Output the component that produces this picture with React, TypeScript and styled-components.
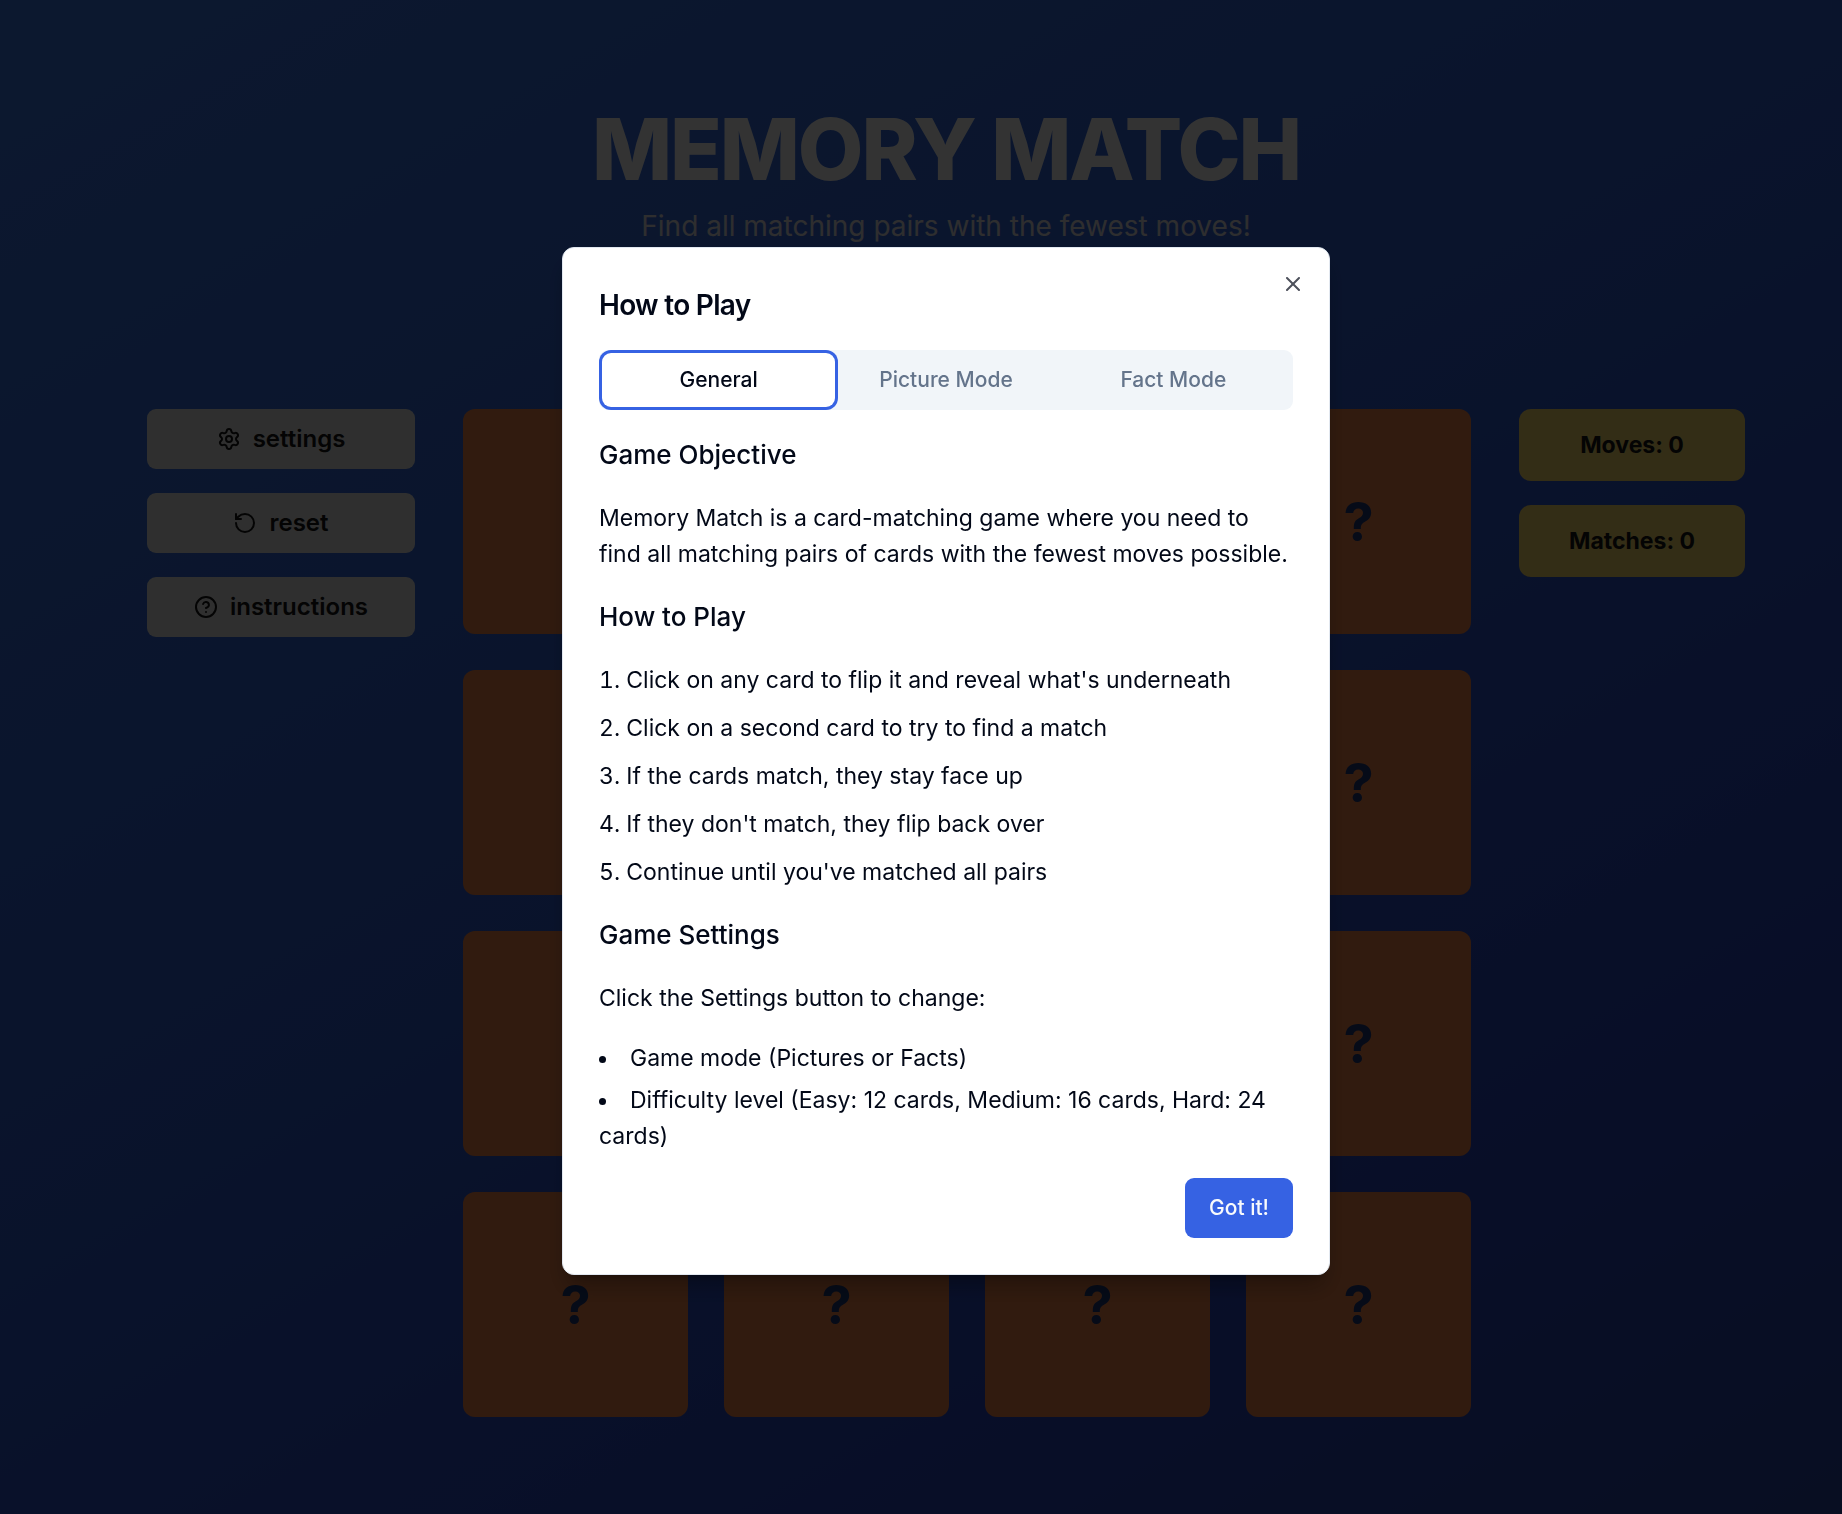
import React, { useState } from "react";
import styled, { createGlobalStyle } from "styled-components";
import { CircleQuestionMark, RotateCcw, Settings, X } from "lucide-react";

const GlobalStyle = createGlobalStyle`
  *, *::before, *::after { box-sizing: border-box; }
  body {
    margin: 0;
    font-family: Inter, "Liberation Sans", sans-serif;
    font-size: 23px;
    line-height: 36px;
    color: #020817;
  }
  h1, h2, h3, p, ol, ul { margin: 0; padding: 0; }
  button { font: inherit; border: 0; cursor: pointer; }
`;

const Page = styled.div`
  min-height: 100vh;
  padding: 105px 48px 96px 98px;
  background: linear-gradient(150deg, rgb(62, 122, 235), rgb(50, 98, 218) 45%, rgb(42, 70, 195) 80%, rgb(40, 70, 170));
`;

const Header = styled.header`
  display: flex;
  flex-direction: column;
  align-items: center;
  gap: 10px;
  margin-bottom: 162px;
  text-align: center;
`;

const GameTitle = styled.h1`
  font-size: 85px;
  line-height: 90px;
  font-weight: 800;
  letter-spacing: -0.025em;
  color: #fff;
`;

const Tagline = styled.p`
  font-size: 28px;
  line-height: 42px;
  color: #e6e6ea;
`;

const Game = styled.main`
  display: grid;
  grid-template-columns: 268px minmax(0, 1fr) 226px;
  gap: 48px;
  align-items: start;
  max-width: 1598px;
  margin: 0 auto;
`;

const Column = styled.div`
  display: flex;
  flex-direction: column;
  gap: 24px;
`;

const MenuButton = styled.button`
  display: flex;
  align-items: center;
  justify-content: center;
  gap: 12px;
  height: 60px;
  border-radius: 9px;
  background: #ebebeb;
  color: #141414;
  font-size: 24px;
  font-weight: 600;
`;

const Board = styled.div`
  display: grid;
  grid-template-columns: repeat(4, minmax(0, 1fr));
  gap: 36px;
`;

const Card = styled.button`
  aspect-ratio: 1;
  border-radius: 12px;
  background: rgb(245, 135, 75);
  color: #1e3a78;
  font-size: 54px;
  line-height: 60px;
  font-weight: 700;
`;

const Stat = styled.div`
  display: flex;
  align-items: center;
  justify-content: center;
  height: 72px;
  border-radius: 12px;
  background: rgb(255, 222, 112);
  color: #141414;
  font-weight: 700;
`;

const Overlay = styled.div`
  position: fixed;
  inset: 0;
  display: grid;
  place-items: center;
  padding: 7px 0 0 50px;
  background: rgba(0, 0, 0, 0.8);
`;

const Dialog = styled.section`
  position: relative;
  display: flex;
  flex-direction: column;
  gap: 24px;
  width: 100%;
  max-width: 768px;
  padding: 36px;
  border: 1px solid #e2e8f0;
  border-radius: 12px;
  background: #fff;
  box-shadow: 0 15px 22px -4px rgba(0, 0, 0, 0.3), 0 6px 9px -6px rgba(0, 0, 0, 0.3);
`;

const CloseButton = styled.button`
  position: absolute;
  top: 24px;
  right: 24px;
  display: flex;
  padding: 0;
  background: none;
  color: #020817;
  opacity: 0.7;
`;

const DialogTitle = styled.h2`
  font-size: 28px;
  line-height: 42px;
  font-weight: 600;
  letter-spacing: -0.025em;
`;

const TabList = styled.div`
  display: grid;
  grid-template-columns: repeat(3, minmax(0, 1fr));
  padding: 6px;
  border-radius: 9px;
  background: #f1f5f9;
`;

const Tab = styled.button<{ $active: boolean }>`
  height: 48px;
  border-radius: 6px;
  outline: none;
  background: ${(p) => (p.$active ? "#fff" : "transparent")};
  color: ${(p) => (p.$active ? "#020817" : "#64748b")};
  box-shadow: ${(p) => (p.$active ? "0 0 0 3px #fff, 0 0 0 6px #3662e3" : "none")};
  font-size: 21px;
  line-height: 30px;
  font-weight: 500;
`;

const Panel = styled.div`
  display: flex;
  flex-direction: column;
  gap: 24px;
`;

const SectionTitle = styled.h3`
  font-size: 26px;
  line-height: 42px;
  font-weight: 500;
`;

const Steps = styled.ol`
  display: flex;
  flex-direction: column;
  gap: 12px;
  list-style: decimal inside;
`;

const Bullets = styled.ul`
  display: flex;
  flex-direction: column;
  gap: 6px;
  list-style: disc inside;
`;

const Footer = styled.footer`
  display: flex;
  justify-content: flex-end;
`;

const PrimaryButton = styled.button`
  height: 60px;
  padding: 0 24px;
  border-radius: 9px;
  background: #3662e3;
  color: #f8fafc;
  font-size: 21px;
  line-height: 30px;
  font-weight: 500;
`;

const TABS = ["General", "Picture Mode", "Fact Mode"];

const STEPS = [
  "Click on any card to flip it and reveal what's underneath",
  "Click on a second card to try to find a match",
  "If the cards match, they stay face up",
  "If they don't match, they flip back over",
  "Continue until you've matched all pairs",
];

const OPTIONS = [
  "Game mode (Pictures or Facts)",
  "Difficulty level (Easy: 12 cards, Medium: 16 cards, Hard: 24 cards)",
];

function Instructions({ onClose }: { onClose: () => void }) {
  const [tab, setTab] = useState(TABS[0]);
  return (
    <Overlay>
      <Dialog role="dialog" aria-modal="true" aria-labelledby="dialog-title">
        <DialogTitle id="dialog-title">How to Play</DialogTitle>
        <TabList role="tablist">
          {TABS.map((name) => (
            <Tab
              key={name}
              type="button"
              role="tab"
              aria-selected={name === tab}
              $active={name === tab}
              onClick={() => setTab(name)}
            >
              {name}
            </Tab>
          ))}
        </TabList>
        <Panel role="tabpanel">
          <SectionTitle>Game Objective</SectionTitle>
          <p>
            Memory Match is a card-matching game where you need to find all matching pairs of cards
            with the fewest moves possible.
          </p>
          <SectionTitle>How to Play</SectionTitle>
          <Steps>
            {STEPS.map((step) => (
              <li key={step}>{step}</li>
            ))}
          </Steps>
          <SectionTitle>Game Settings</SectionTitle>
          <p>Click the Settings button to change:</p>
          <Bullets>
            {OPTIONS.map((option) => (
              <li key={option}>{option}</li>
            ))}
          </Bullets>
        </Panel>
        <Footer>
          <PrimaryButton type="button" onClick={onClose}>
            Got it!
          </PrimaryButton>
        </Footer>
        <CloseButton type="button" aria-label="Close" onClick={onClose}>
          <X size={24} />
        </CloseButton>
      </Dialog>
    </Overlay>
  );
}

export default function App() {
  const [open, setOpen] = useState(true);
  return (
    <>
      <GlobalStyle />
      <Page>
        <Header>
          <GameTitle>MEMORY MATCH</GameTitle>
          <Tagline>Find all matching pairs with the fewest moves!</Tagline>
        </Header>
        <Game>
          <Column>
            <MenuButton type="button">
              <Settings size={24} />
              settings
            </MenuButton>
            <MenuButton type="button">
              <RotateCcw size={24} />
              reset
            </MenuButton>
            <MenuButton type="button" onClick={() => setOpen(true)}>
              <CircleQuestionMark size={24} />
              instructions
            </MenuButton>
          </Column>
          <Board>
            {Array.from({ length: 16 }, (_, i) => (
              <Card key={i} type="button">
                ?
              </Card>
            ))}
          </Board>
          <Column>
            <Stat>Moves: 0</Stat>
            <Stat>Matches: 0</Stat>
          </Column>
        </Game>
      </Page>
      {open && <Instructions onClose={() => setOpen(false)} />}
    </>
  );
}
